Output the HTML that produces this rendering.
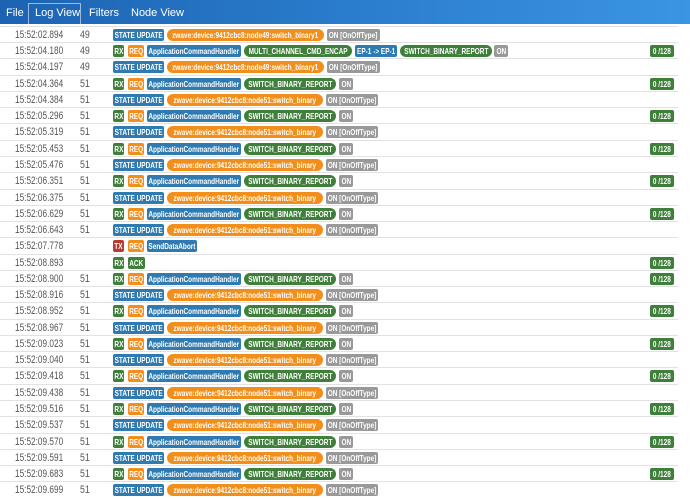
<!DOCTYPE html>
<html><head><meta charset="utf-8"><style>
*{margin:0;padding:0;box-sizing:border-box}
body{width:690px;height:497px;overflow:hidden;background:#fff;font-family:"Liberation Sans",Arial,sans-serif;position:relative}
.hdr{position:absolute;left:0;top:0;width:690px;height:24px;background:linear-gradient(90deg,#1d63b3,#2a7ccc 50%,#3b95e2);z-index:2}
.hdr span{position:absolute;top:7px;color:#fff;font-size:11px}
.tab{position:absolute;left:28px;top:3px;width:53px;height:21px;border:1px solid rgba(255,255,255,.55);border-bottom:none}
.list{position:absolute;left:0;top:10px;width:678px}
.r{position:relative;height:16.27px;border-bottom:1px solid #e2e2e2}
.t{position:absolute;left:15px;top:2px;font-size:11px;color:#555;transform:scaleX(.75);transform-origin:left;white-space:nowrap}
.n{position:absolute;left:80px;top:2px;font-size:11px;color:#555;transform:scaleX(.8);transform-origin:left}
.b{position:absolute;top:2px;height:12px;border-radius:2px;color:#fff;font-size:8.5px;font-weight:bold;line-height:12px;white-space:nowrap;display:flex;justify-content:center}
.b i{font-style:normal;display:block;flex:none;transform:scaleX(.76)}
.bl{background:#2f7ab0}.gr{background:#3e7f3a}.or{background:#f28f1c;border-radius:6px}.gy{background:#999}.rd{background:#b53b34}.gp{background:#3e7f3a;border-radius:6px}
</style></head><body>
<div class="hdr"><div class="tab"></div>
<span style="left:6px">File</span><span style="left:35px">Log View</span><span style="left:89px">Filters</span><span style="left:131px">Node View</span></div>
<div class="list">
<div class="r" style="height:16.9px"><div class="b gr" style="left:113px;width:11px"><i>RX</i></div><div class="b or" style="left:128px;width:16px;border-radius:2px"><i>REQ</i></div><div class="b gp" style="left:244px;width:108px"><i>x</i></div></div>
<div class="r"><span class="t">15:52:02.894</span><span class="n">49</span><div class="b bl" style="left:113px;width:51px"><i>STATE UPDATE</i></div><div class="b or" style="left:167px;width:157px"><i>zwave:device:9412cbc8:node49:switch_binary1</i></div><div class="b gy" style="left:327px;width:53px"><i>ON [OnOffType]</i></div></div>
<div class="r"><span class="t">15:52:04.180</span><span class="n">49</span><div class="b gr" style="left:113px;width:11px"><i>RX</i></div><div class="b or" style="left:128px;width:16px;border-radius:2px"><i>REQ</i></div><div class="b bl" style="left:147px;width:94px"><i>ApplicationCommandHandler</i></div><div class="b gp" style="left:244px;width:108px"><i>MULTI_CHANNEL_CMD_ENCAP</i></div><div class="b bl" style="left:355px;width:42px"><i>EP-1 -&gt; EP-1</i></div><div class="b gp" style="left:400px;width:92px"><i>SWITCH_BINARY_REPORT</i></div><div class="b gy" style="left:494px;width:14px"><i>ON</i></div><div class="b gr" style="left:650px;width:24px"><i>0 /128</i></div></div>
<div class="r"><span class="t">15:52:04.197</span><span class="n">49</span><div class="b bl" style="left:113px;width:51px"><i>STATE UPDATE</i></div><div class="b or" style="left:167px;width:157px"><i>zwave:device:9412cbc8:node49:switch_binary1</i></div><div class="b gy" style="left:327px;width:53px"><i>ON [OnOffType]</i></div></div>
<div class="r"><span class="t">15:52:04.364</span><span class="n">51</span><div class="b gr" style="left:113px;width:11px"><i>RX</i></div><div class="b or" style="left:128px;width:16px;border-radius:2px"><i>REQ</i></div><div class="b bl" style="left:147px;width:94px"><i>ApplicationCommandHandler</i></div><div class="b gp" style="left:244px;width:92px"><i>SWITCH_BINARY_REPORT</i></div><div class="b gy" style="left:339px;width:14px"><i>ON</i></div><div class="b gr" style="left:650px;width:24px"><i>0 /128</i></div></div>
<div class="r"><span class="t">15:52:04.384</span><span class="n">51</span><div class="b bl" style="left:113px;width:51px"><i>STATE UPDATE</i></div><div class="b or" style="left:167px;width:156px"><i>zwave:device:9412cbc8:node51:switch_binary</i></div><div class="b gy" style="left:326px;width:52px"><i>ON [OnOffType]</i></div></div>
<div class="r"><span class="t">15:52:05.296</span><span class="n">51</span><div class="b gr" style="left:113px;width:11px"><i>RX</i></div><div class="b or" style="left:128px;width:16px;border-radius:2px"><i>REQ</i></div><div class="b bl" style="left:147px;width:94px"><i>ApplicationCommandHandler</i></div><div class="b gp" style="left:244px;width:92px"><i>SWITCH_BINARY_REPORT</i></div><div class="b gy" style="left:339px;width:14px"><i>ON</i></div><div class="b gr" style="left:650px;width:24px"><i>0 /128</i></div></div>
<div class="r"><span class="t">15:52:05.319</span><span class="n">51</span><div class="b bl" style="left:113px;width:51px"><i>STATE UPDATE</i></div><div class="b or" style="left:167px;width:156px"><i>zwave:device:9412cbc8:node51:switch_binary</i></div><div class="b gy" style="left:326px;width:52px"><i>ON [OnOffType]</i></div></div>
<div class="r"><span class="t">15:52:05.453</span><span class="n">51</span><div class="b gr" style="left:113px;width:11px"><i>RX</i></div><div class="b or" style="left:128px;width:16px;border-radius:2px"><i>REQ</i></div><div class="b bl" style="left:147px;width:94px"><i>ApplicationCommandHandler</i></div><div class="b gp" style="left:244px;width:92px"><i>SWITCH_BINARY_REPORT</i></div><div class="b gy" style="left:339px;width:14px"><i>ON</i></div><div class="b gr" style="left:650px;width:24px"><i>0 /128</i></div></div>
<div class="r"><span class="t">15:52:05.476</span><span class="n">51</span><div class="b bl" style="left:113px;width:51px"><i>STATE UPDATE</i></div><div class="b or" style="left:167px;width:156px"><i>zwave:device:9412cbc8:node51:switch_binary</i></div><div class="b gy" style="left:326px;width:52px"><i>ON [OnOffType]</i></div></div>
<div class="r"><span class="t">15:52:06.351</span><span class="n">51</span><div class="b gr" style="left:113px;width:11px"><i>RX</i></div><div class="b or" style="left:128px;width:16px;border-radius:2px"><i>REQ</i></div><div class="b bl" style="left:147px;width:94px"><i>ApplicationCommandHandler</i></div><div class="b gp" style="left:244px;width:92px"><i>SWITCH_BINARY_REPORT</i></div><div class="b gy" style="left:339px;width:14px"><i>ON</i></div><div class="b gr" style="left:650px;width:24px"><i>0 /128</i></div></div>
<div class="r"><span class="t">15:52:06.375</span><span class="n">51</span><div class="b bl" style="left:113px;width:51px"><i>STATE UPDATE</i></div><div class="b or" style="left:167px;width:156px"><i>zwave:device:9412cbc8:node51:switch_binary</i></div><div class="b gy" style="left:326px;width:52px"><i>ON [OnOffType]</i></div></div>
<div class="r"><span class="t">15:52:06.629</span><span class="n">51</span><div class="b gr" style="left:113px;width:11px"><i>RX</i></div><div class="b or" style="left:128px;width:16px;border-radius:2px"><i>REQ</i></div><div class="b bl" style="left:147px;width:94px"><i>ApplicationCommandHandler</i></div><div class="b gp" style="left:244px;width:92px"><i>SWITCH_BINARY_REPORT</i></div><div class="b gy" style="left:339px;width:14px"><i>ON</i></div><div class="b gr" style="left:650px;width:24px"><i>0 /128</i></div></div>
<div class="r"><span class="t">15:52:06.643</span><span class="n">51</span><div class="b bl" style="left:113px;width:51px"><i>STATE UPDATE</i></div><div class="b or" style="left:167px;width:156px"><i>zwave:device:9412cbc8:node51:switch_binary</i></div><div class="b gy" style="left:326px;width:52px"><i>ON [OnOffType]</i></div></div>
<div class="r"><span class="t">15:52:07.778</span><div class="b rd" style="left:113px;width:11px"><i>TX</i></div><div class="b or" style="left:128px;width:16px;border-radius:2px"><i>REQ</i></div><div class="b bl" style="left:147px;width:50px"><i>SendDataAbort</i></div></div>
<div class="r"><span class="t">15:52:08.893</span><div class="b gr" style="left:113px;width:11px"><i>RX</i></div><div class="b gr" style="left:128px;width:17px"><i>ACK</i></div><div class="b gr" style="left:650px;width:24px"><i>0 /128</i></div></div>
<div class="r"><span class="t">15:52:08.900</span><span class="n">51</span><div class="b gr" style="left:113px;width:11px"><i>RX</i></div><div class="b or" style="left:128px;width:16px;border-radius:2px"><i>REQ</i></div><div class="b bl" style="left:147px;width:94px"><i>ApplicationCommandHandler</i></div><div class="b gp" style="left:244px;width:92px"><i>SWITCH_BINARY_REPORT</i></div><div class="b gy" style="left:339px;width:14px"><i>ON</i></div><div class="b gr" style="left:650px;width:24px"><i>0 /128</i></div></div>
<div class="r"><span class="t">15:52:08.916</span><span class="n">51</span><div class="b bl" style="left:113px;width:51px"><i>STATE UPDATE</i></div><div class="b or" style="left:167px;width:156px"><i>zwave:device:9412cbc8:node51:switch_binary</i></div><div class="b gy" style="left:326px;width:52px"><i>ON [OnOffType]</i></div></div>
<div class="r"><span class="t">15:52:08.952</span><span class="n">51</span><div class="b gr" style="left:113px;width:11px"><i>RX</i></div><div class="b or" style="left:128px;width:16px;border-radius:2px"><i>REQ</i></div><div class="b bl" style="left:147px;width:94px"><i>ApplicationCommandHandler</i></div><div class="b gp" style="left:244px;width:92px"><i>SWITCH_BINARY_REPORT</i></div><div class="b gy" style="left:339px;width:14px"><i>ON</i></div><div class="b gr" style="left:650px;width:24px"><i>0 /128</i></div></div>
<div class="r"><span class="t">15:52:08.967</span><span class="n">51</span><div class="b bl" style="left:113px;width:51px"><i>STATE UPDATE</i></div><div class="b or" style="left:167px;width:156px"><i>zwave:device:9412cbc8:node51:switch_binary</i></div><div class="b gy" style="left:326px;width:52px"><i>ON [OnOffType]</i></div></div>
<div class="r"><span class="t">15:52:09.023</span><span class="n">51</span><div class="b gr" style="left:113px;width:11px"><i>RX</i></div><div class="b or" style="left:128px;width:16px;border-radius:2px"><i>REQ</i></div><div class="b bl" style="left:147px;width:94px"><i>ApplicationCommandHandler</i></div><div class="b gp" style="left:244px;width:92px"><i>SWITCH_BINARY_REPORT</i></div><div class="b gy" style="left:339px;width:14px"><i>ON</i></div><div class="b gr" style="left:650px;width:24px"><i>0 /128</i></div></div>
<div class="r"><span class="t">15:52:09.040</span><span class="n">51</span><div class="b bl" style="left:113px;width:51px"><i>STATE UPDATE</i></div><div class="b or" style="left:167px;width:156px"><i>zwave:device:9412cbc8:node51:switch_binary</i></div><div class="b gy" style="left:326px;width:52px"><i>ON [OnOffType]</i></div></div>
<div class="r"><span class="t">15:52:09.418</span><span class="n">51</span><div class="b gr" style="left:113px;width:11px"><i>RX</i></div><div class="b or" style="left:128px;width:16px;border-radius:2px"><i>REQ</i></div><div class="b bl" style="left:147px;width:94px"><i>ApplicationCommandHandler</i></div><div class="b gp" style="left:244px;width:92px"><i>SWITCH_BINARY_REPORT</i></div><div class="b gy" style="left:339px;width:14px"><i>ON</i></div><div class="b gr" style="left:650px;width:24px"><i>0 /128</i></div></div>
<div class="r"><span class="t">15:52:09.438</span><span class="n">51</span><div class="b bl" style="left:113px;width:51px"><i>STATE UPDATE</i></div><div class="b or" style="left:167px;width:156px"><i>zwave:device:9412cbc8:node51:switch_binary</i></div><div class="b gy" style="left:326px;width:52px"><i>ON [OnOffType]</i></div></div>
<div class="r"><span class="t">15:52:09.516</span><span class="n">51</span><div class="b gr" style="left:113px;width:11px"><i>RX</i></div><div class="b or" style="left:128px;width:16px;border-radius:2px"><i>REQ</i></div><div class="b bl" style="left:147px;width:94px"><i>ApplicationCommandHandler</i></div><div class="b gp" style="left:244px;width:92px"><i>SWITCH_BINARY_REPORT</i></div><div class="b gy" style="left:339px;width:14px"><i>ON</i></div><div class="b gr" style="left:650px;width:24px"><i>0 /128</i></div></div>
<div class="r"><span class="t">15:52:09.537</span><span class="n">51</span><div class="b bl" style="left:113px;width:51px"><i>STATE UPDATE</i></div><div class="b or" style="left:167px;width:156px"><i>zwave:device:9412cbc8:node51:switch_binary</i></div><div class="b gy" style="left:326px;width:52px"><i>ON [OnOffType]</i></div></div>
<div class="r"><span class="t">15:52:09.570</span><span class="n">51</span><div class="b gr" style="left:113px;width:11px"><i>RX</i></div><div class="b or" style="left:128px;width:16px;border-radius:2px"><i>REQ</i></div><div class="b bl" style="left:147px;width:94px"><i>ApplicationCommandHandler</i></div><div class="b gp" style="left:244px;width:92px"><i>SWITCH_BINARY_REPORT</i></div><div class="b gy" style="left:339px;width:14px"><i>ON</i></div><div class="b gr" style="left:650px;width:24px"><i>0 /128</i></div></div>
<div class="r"><span class="t">15:52:09.591</span><span class="n">51</span><div class="b bl" style="left:113px;width:51px"><i>STATE UPDATE</i></div><div class="b or" style="left:167px;width:156px"><i>zwave:device:9412cbc8:node51:switch_binary</i></div><div class="b gy" style="left:326px;width:52px"><i>ON [OnOffType]</i></div></div>
<div class="r"><span class="t">15:52:09.683</span><span class="n">51</span><div class="b gr" style="left:113px;width:11px"><i>RX</i></div><div class="b or" style="left:128px;width:16px;border-radius:2px"><i>REQ</i></div><div class="b bl" style="left:147px;width:94px"><i>ApplicationCommandHandler</i></div><div class="b gp" style="left:244px;width:92px"><i>SWITCH_BINARY_REPORT</i></div><div class="b gy" style="left:339px;width:14px"><i>ON</i></div><div class="b gr" style="left:650px;width:24px"><i>0 /128</i></div></div>
<div class="r" style="border-bottom:none"><span class="t">15:52:09.699</span><span class="n">51</span><div class="b bl" style="left:113px;width:51px"><i>STATE UPDATE</i></div><div class="b or" style="left:167px;width:156px"><i>zwave:device:9412cbc8:node51:switch_binary</i></div><div class="b gy" style="left:326px;width:52px"><i>ON [OnOffType]</i></div></div>
</div>
</body></html>
